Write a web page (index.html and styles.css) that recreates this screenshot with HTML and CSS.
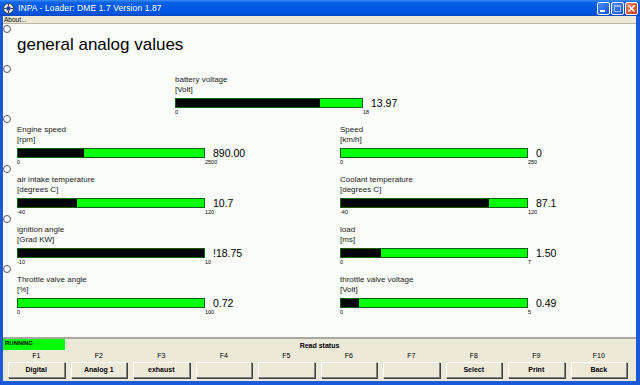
FILE: index.html
```html
<!DOCTYPE html>
<html lang="en">
<head>
  <meta charset="UTF-8">
  <title>INPA - Loader: DME 1.7 Version 1.87</title>
  <link rel="stylesheet" href="styles.css">
</head>
<body>
  <div class="window">
    <div class="titlebar">
      <svg class="app-icon" width="11" height="11" viewBox="0 0 11 11">
        <circle cx="5.5" cy="5.5" r="5" fill="#e8e8e8" stroke="#404040" stroke-width="1"/>
        <circle cx="5.5" cy="5.5" r="2.2" fill="#1c3c9c"/>
        <path d="M5.5 0.8 V3 M5.5 8 V10.2 M0.8 5.5 H3 M8 5.5 H10.2" stroke="#404040" stroke-width="1"/>
      </svg>
      <span class="title">INPA - Loader: DME 1.7 Version 1.87</span>
      <div class="caption-buttons">
        <span class="cap min"><svg width="11" height="11" viewBox="0 0 11 11"><rect x="2" y="7" width="5" height="2" fill="#fff"/></svg></span>
        <span class="cap max"><svg width="11" height="11" viewBox="0 0 11 11"><rect x="2.5" y="2.5" width="6" height="6" fill="none" stroke="#9fb8ee" stroke-width="1"/><rect x="2.5" y="2.5" width="6" height="1.5" fill="#9fb8ee"/></svg></span>
        <span class="cap close"><svg width="11" height="11" viewBox="0 0 11 11"><path d="M2.5 2.5 L8.5 8.5 M8.5 2.5 L2.5 8.5" stroke="#fff" stroke-width="1.6"/></svg></span>
      </div>
    </div>

    <div class="frame">
      <div class="menubar">About...</div>

      <div class="content">
        <div class="radios">
          <span class="radio"></span>
          <span class="radio"></span>
          <span class="radio"></span>
          <span class="radio"></span>
          <span class="radio"></span>
          <span class="radio"></span>
        </div>

        <div class="main">
          <h1>general analog values</h1>

          <div class="gauge solo">
            <div class="label">battery voltage</div>
            <div class="label">[Volt]</div>
            <div class="meter"><div class="bar"><div class="fill" style="width: 77.6%"></div></div><span class="value">13.97</span></div>
            <div class="scale"><span>0</span><span>18</span></div>
          </div>

          <div class="gauges">
            <div class="gauge">
              <div class="label">Engine speed</div>
              <div class="label">[rpm]</div>
              <div class="meter"><div class="bar"><div class="fill" style="width: 35.6%"></div></div><span class="value">890.00</span></div>
              <div class="scale"><span>0</span><span>2500</span></div>
            </div>
            <div class="gauge">
              <div class="label">Speed</div>
              <div class="label">[km/h]</div>
              <div class="meter"><div class="bar"><div class="fill" style="width: 0%"></div></div><span class="value">0</span></div>
              <div class="scale"><span>0</span><span>250</span></div>
            </div>
            <div class="gauge">
              <div class="label">air intake temperature</div>
              <div class="label">[degrees C]</div>
              <div class="meter"><div class="bar"><div class="fill" style="width: 31.7%"></div></div><span class="value">10.7</span></div>
              <div class="scale"><span>-40</span><span>120</span></div>
            </div>
            <div class="gauge">
              <div class="label">Coolant temperature</div>
              <div class="label">[degrees C]</div>
              <div class="meter"><div class="bar"><div class="fill" style="width: 79.4%"></div></div><span class="value">87.1</span></div>
              <div class="scale"><span>-40</span><span>120</span></div>
            </div>
            <div class="gauge">
              <div class="label">ignition angle</div>
              <div class="label">[Grad KW]</div>
              <div class="meter"><div class="bar"><div class="fill" style="width: 100%"></div></div><span class="value">!18.75</span></div>
              <div class="scale"><span>-10</span><span>10</span></div>
            </div>
            <div class="gauge">
              <div class="label">load</div>
              <div class="label">[ms]</div>
              <div class="meter"><div class="bar"><div class="fill" style="width: 21.4%"></div></div><span class="value">1.50</span></div>
              <div class="scale"><span>0</span><span>7</span></div>
            </div>
            <div class="gauge">
              <div class="label">Throttle valve angle</div>
              <div class="label">[%]</div>
              <div class="meter"><div class="bar"><div class="fill" style="width: 0%"></div></div><span class="value">0.72</span></div>
              <div class="scale"><span>0</span><span>100</span></div>
            </div>
            <div class="gauge">
              <div class="label">throttle valve voltage</div>
              <div class="label">[Volt]</div>
              <div class="meter"><div class="bar"><div class="fill" style="width: 9.8%"></div></div><span class="value">0.49</span></div>
              <div class="scale"><span>0</span><span>5</span></div>
            </div>
          </div>
        </div>
      </div>

      <div class="status">
        <div class="statusline">
          <span class="running">RUNNING</span>
          <span class="status-text">Read status</span>
          <span></span>
        </div>
        <div class="fkeys">
          <div class="fkey"><span class="fname">F1</span><span class="fbtn">Digital</span></div>
          <div class="fkey"><span class="fname">F2</span><span class="fbtn">Analog 1</span></div>
          <div class="fkey"><span class="fname">F3</span><span class="fbtn">exhaust</span></div>
          <div class="fkey"><span class="fname">F4</span><span class="fbtn"></span></div>
          <div class="fkey"><span class="fname">F5</span><span class="fbtn"></span></div>
          <div class="fkey"><span class="fname">F6</span><span class="fbtn"></span></div>
          <div class="fkey"><span class="fname">F7</span><span class="fbtn"></span></div>
          <div class="fkey"><span class="fname">F8</span><span class="fbtn">Select</span></div>
          <div class="fkey"><span class="fname">F9</span><span class="fbtn">Print</span></div>
          <div class="fkey"><span class="fname">F10</span><span class="fbtn">Back</span></div>
        </div>
      </div>
    </div>
  </div>
</body>
</html>
```

FILE: styles.css
```css
body {
  margin: 0;
  background-color: #ece9d8;
  font-family: "Liberation Sans", Arial, sans-serif;
  color: #000;
}
.window {
  width: 640px;
  height: 385px;
  display: flex;
  flex-direction: column;
  overflow: hidden;
}
.titlebar {
  height: 16px;
  flex: none;
  display: flex;
  align-items: center;
  padding: 0 2px 0 3px;
  background: linear-gradient(to bottom, #3d8cf6 0%, #0a62e8 15%, #0058e4 50%, #0053dc 85%, #0046c0 100%);
}
.app-icon {
  flex: none;
}
.title {
  margin-left: 4px;
  color: #fff;
  font-size: 8.5px;
  letter-spacing: 0.1px;
}
.caption-buttons {
  margin-left: auto;
  display: flex;
  gap: 1px;
}
.cap {
  width: 11px;
  height: 11px;
  border: 1px solid #fff;
  border-radius: 2px;
  background: linear-gradient(135deg, #4b8cf8, #1653d8);
  display: flex;
}
.cap.close {
  background: linear-gradient(135deg, #e8896a, #c53b13);
}
.frame {
  flex: 1;
  min-height: 0;
  display: flex;
  flex-direction: column;
  border-style: solid;
  border-color: #1a5ad8;
  border-width: 0 4px 4px 3px;
}
.menubar {
  height: 7px;
  flex: none;
  border-bottom: 1px solid #b9b6a7;
  font-size: 6.5px;
  line-height: 7px;
  padding-left: 1px;
}
.content {
  flex: 1;
  display: flex;
  background-color: #fbfdfb;
}
.radios {
  width: 14px;
  flex: none;
  display: flex;
  flex-direction: column;
  padding-top: 1px;
}
.radio {
  width: 6px;
  height: 6px;
  border: 1px solid #5a5a5a;
  border-radius: 50%;
  background-color: #fff;
}
.radio + .radio {
  margin-top: 42px;
}
.radio:nth-child(2) {
  margin-top: 32px;
}
.main {
  flex: 1;
}
h1 {
  margin: 10px 0 0 0;
  font-size: 17px;
  line-height: 22px;
  font-weight: normal;
}
.gauge {
  height: 50px;
}
.gauge.solo {
  margin: 19px 0 0 158px;
}
.gauges {
  display: grid;
  grid-template-columns: 323px 1fr;
}
.label {
  font-size: 8px;
  line-height: 10px;
  color: #1a1a1a;
  white-space: nowrap;
}
.meter {
  margin-top: 3px;
  display: flex;
  align-items: center;
  height: 10px;
}
.bar {
  width: 186px;
  height: 8px;
  border: 1px solid #0b620b;
  background-color: #00ff00;
}
.fill {
  height: 100%;
  background-color: #000;
}
.value {
  margin-left: 8px;
  font-size: 10.5px;
  line-height: 10px;
}
.scale {
  display: grid;
  grid-template-columns: 188px auto;
  justify-content: start;
  margin-top: 1px;
  font-size: 5.5px;
  line-height: 7px;
}
.status {
  flex: none;
  border-top: 2px solid #a9a7a0;
  background-color: #ece9d8;
}
.statusline {
  height: 12px;
  display: grid;
  grid-template-columns: 1fr auto 1fr;
  align-items: center;
}
.running {
  width: 60px;
  height: 11px;
  align-self: start;
  padding-left: 2px;
  background-color: #00ff00;
  font-size: 6px;
  font-weight: bold;
  line-height: 9px;
}
.status-text {
  font-size: 7px;
  font-weight: bold;
}
.fkeys {
  display: grid;
  grid-template-columns: repeat(10, 1fr);
  gap: 6px;
  padding: 0 9px 3px 5px;
}
.fkey {
  display: flex;
  flex-direction: column;
  align-items: stretch;
}
.fname {
  text-align: center;
  font-size: 7px;
  line-height: 9px;
}
.fbtn {
  margin-top: 2px;
  height: 14px;
  border-style: solid;
  border-width: 1px;
  border-color: #fff #808080 #808080 #fff;
  box-shadow: 1px 1px 0 #404040;
  background-color: #ece9d8;
  text-align: center;
  font-size: 7px;
  font-weight: bold;
  line-height: 14px;
}
```
